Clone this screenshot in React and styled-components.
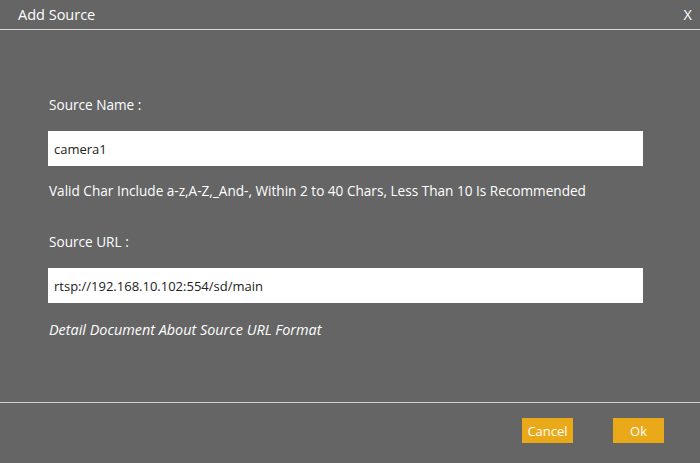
import React from "react";
import styled, { createGlobalStyle } from "styled-components";

const GlobalStyle = createGlobalStyle`
  *, *::before, *::after {
    box-sizing: border-box;
  }
  html, body {
    margin: 0;
    padding: 0;
    background: #656565;
  }
  body {
    font-family: "Open Sans", "Noto Sans", sans-serif;
  }
`;

export default function App() {
  return (
    <Dialog>
      <GlobalStyle />
      <TitleBar>
        <Title>Add Source</Title>
        <Close>X</Close>
      </TitleBar>
      <Body>
        <Label>Source Name :</Label>
        <Input defaultValue="camera1" />
        <Hint>Valid Char Include a-z,A-Z,_And-, Within 2 to 40 Chars, Less Than 10 Is Recommended</Hint>
        <Label $top={33}>Source URL :</Label>
        <Input defaultValue="rtsp://192.168.10.102:554/sd/main" />
        <DocLink>Detail Document About Source URL Format</DocLink>
      </Body>
      <Footer>
        <Button>Cancel</Button>
        <Button>Ok</Button>
      </Footer>
    </Dialog>
  );
}

const Dialog = styled.div`
  width: 700px;
  height: 463px;
  background: #656565;
  color: #fff;
  display: flex;
  flex-direction: column;
`;

const TitleBar = styled.div`
  height: 30px;
  border-bottom: 1px solid #d8d8d8;
  display: flex;
  align-items: center;
  justify-content: space-between;
  padding: 0 8px 0 18px;
`;

const Title = styled.span`
  font-size: 14.5px;
`;

const Close = styled.span`
  font-size: 14.5px;
`;

const Body = styled.div`
  flex: 1;
  padding: 66px 0 0 48px;
  display: flex;
  flex-direction: column;
  align-items: flex-start;
`;

const Label = styled.div`
  font-size: 13.6px;
  line-height: 18px;
  padding-left: 1px;
  margin-top: ${({ $top }) => ($top ? `${$top}px` : "0")};
  margin-bottom: 17px;
`;

const Input = styled.input`
  width: 595px;
  height: 35px;
  border: none;
  outline: none;
  padding: 0 6px;
  font-family: inherit;
  font-size: 13px;
  color: #222;
  background: #fff;
`;

const Hint = styled.div`
  font-size: 13.6px;
  line-height: 18px;
  margin-top: 16px;
  padding-left: 1px;
`;

const DocLink = styled.div`
  font-size: 14.4px;
  line-height: 18px;
  font-style: italic;
  margin-top: 18px;
  padding-left: 1px;
`;

const Footer = styled.div`
  height: 61px;
  border-top: 1px solid #cfcfcf;
  display: flex;
  justify-content: flex-end;
  align-items: flex-start;
  gap: 40px;
  padding: 15px 36px 0 0;
`;

const Button = styled.button`
  width: 51px;
  height: 25px;
  border: none;
  background: #e9a919;
  color: #fff;
  font-family: inherit;
  font-size: 13px;
  padding: 0;
  cursor: pointer;
`;
